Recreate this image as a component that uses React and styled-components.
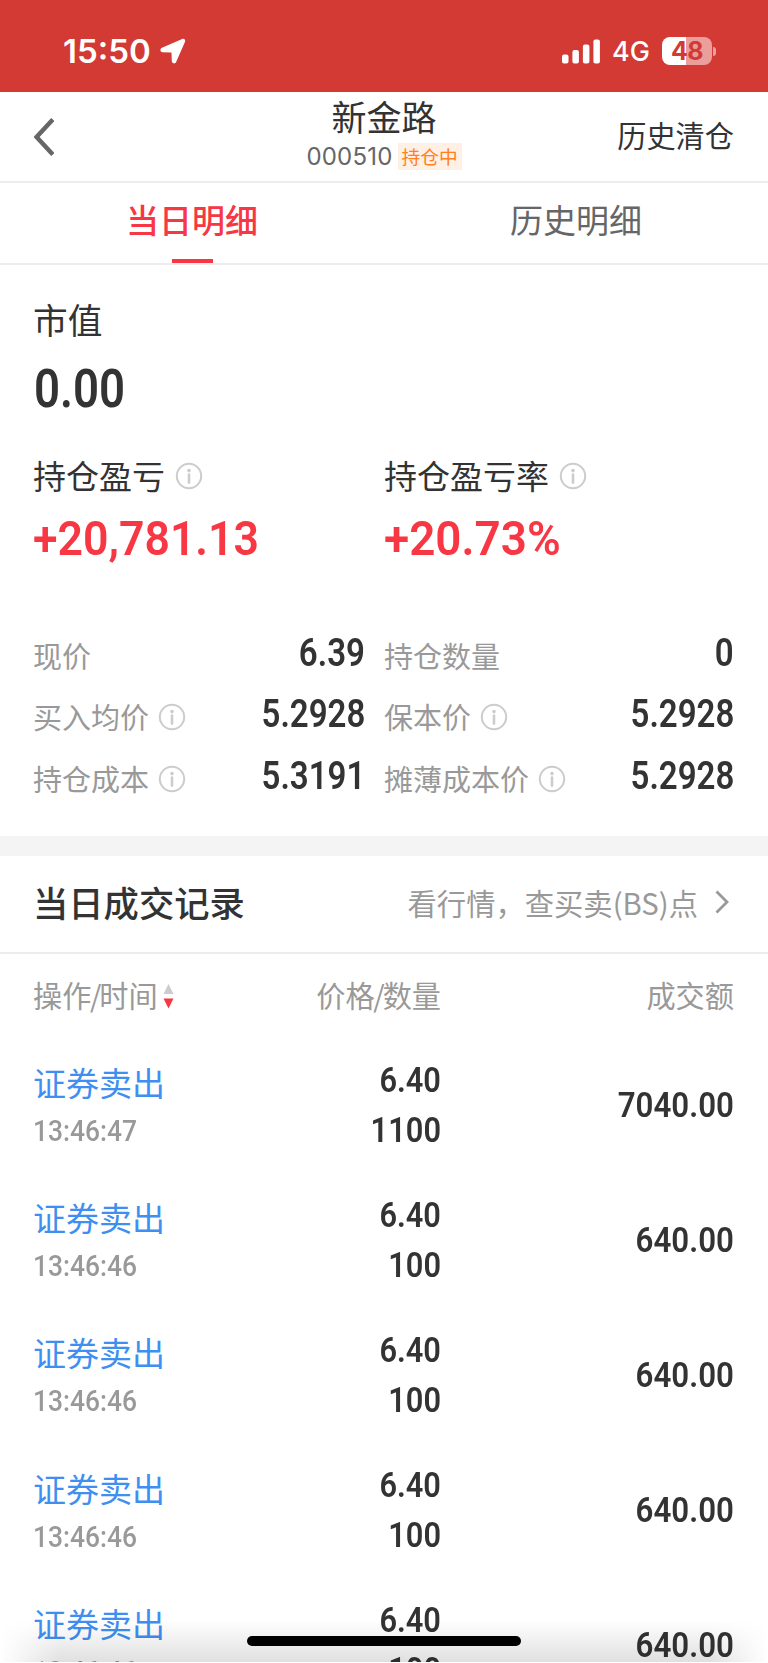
import React from "react";
import styled, { createGlobalStyle } from "styled-components";

const GlobalStyle = createGlobalStyle`
  * {
    box-sizing: border-box;
  }

  body {
    margin: 0;
    background: #fff;
    font-family: "Noto Sans CJK SC", sans-serif;
    color: #333;
  }
`;

const Screen = styled.div`
  position: relative;
  width: 768px;
  height: 1662px;
  overflow: hidden;
  background: #fff;
`;

const StatusBar = styled.div`
  display: flex;
  align-items: center;
  height: 92px;
  padding: 10px 52px 0 63px;
  background: #d33a33;
  color: #fff;
  font-family: Inter, sans-serif;
`;

const Clock = styled.span`
  width: 97px;
  font-size: 33px;
  font-weight: 600;
  line-height: 40px;
`;

const StatusIcons = styled.div`
  display: flex;
  align-items: center;
  margin-left: auto;
`;

const Network = styled.span`
  width: 50px;
  margin-left: 11px;
  padding-top: 2px;
  font-size: 27px;
  font-weight: 450;
  line-height: 34px;
`;

const Battery = styled.div`
  display: flex;
  align-items: center;
  justify-content: center;
  width: 50px;
  height: 28px;
  border-radius: 8px;
  background: linear-gradient(to right, #fff 24px, #eb9f9c 24px);
  color: #d33a33;
  font-size: 25px;
  font-weight: 700;
  line-height: 28px;
  letter-spacing: -0.5px;
`;

const BatteryTip = styled.span`
  width: 3px;
  height: 9px;
  margin-left: 1px;
  border-radius: 0 4px 4px 0;
  background: #eb9f9c;
`;

const Header = styled.header`
  display: grid;
  grid-template-columns: 1fr auto 1fr;
  align-items: center;
  height: 91px;
  padding: 0 34px;
  border-bottom: 2px solid #ededed;
`;

const TitleBlock = styled.div`
  display: flex;
  flex-direction: column;
  align-items: center;
  padding-bottom: 5px;
`;

const Title = styled.h1`
  margin: -1px 0 2px;
  font-size: 35px;
  font-weight: 400;
  line-height: 43px;
`;

const Code = styled.div`
  display: flex;
  align-items: center;
  gap: 5px;
  height: 35px;
  color: #666;
  font-family: Inter, sans-serif;
  font-size: 24px;
  letter-spacing: 0.2px;
`;

const Tag = styled.span`
  width: 64px;
  height: 27px;
  background: #fff0e6;
  color: #ff7f22;
  font-family: "Noto Sans CJK SC", sans-serif;
  font-size: 18.7px;
  line-height: 25px;
  letter-spacing: 0;
  text-align: center;
`;

const HeaderLink = styled.a`
  justify-self: end;
  padding-bottom: 5px;
  font-size: 29.2px;
  line-height: 40px;
`;

const Tabs = styled.nav`
  display: flex;
  height: 82px;
  border-bottom: 2px solid #ededed;
`;

const Tab = styled.button`
  display: flex;
  flex: 1;
  flex-direction: column;
  align-items: center;
  justify-content: space-between;
  padding: 12px 0 0;
  border: none;
  background: none;
  color: ${({ $active }) => ($active ? "#f73744" : "#666")};
  font-family: inherit;
  font-size: 33px;
  font-weight: ${({ $active }) => ($active ? 500 : 400)};
  line-height: 48px;

  &::after {
    content: "";
    width: 41px;
    height: 4px;
    background: ${({ $active }) => ($active ? "#f73744" : "transparent")};
  }
`;

const Summary = styled.section`
  height: 571px;
  padding: 30px 34px 0 33px;
`;

const MarketLabel = styled.div`
  font-size: 34.7px;
  line-height: 48px;
`;

const MarketValue = styled.div`
  height: 108px;
  padding: 16px 0 0 1px;
`;

/* narrow digits used for every amount */
const Num = styled.span`
  display: block;
  color: ${({ $color }) => $color || "#333"};
  font-family: Roboto, sans-serif;
  font-size: ${({ $size }) => $size}px;
  font-weight: ${({ $weight }) => $weight || 600};
  line-height: ${({ $line }) => $line || 50}px;
  white-space: nowrap;
  transform: scaleX(${({ $scale }) => $scale || 0.88});
  transform-origin: ${({ $right }) => ($right ? "right" : "left")} center;
`;

const Columns = styled.div`
  display: grid;
  grid-template-columns: 332px 350px;
  column-gap: 19px;
`;

const ProfitRow = styled(Columns)`
  height: 171px;
`;

const ProfitLabel = styled.div`
  display: flex;
  align-items: center;
  gap: 10px;
  font-size: 33px;
  line-height: 48px;
  margin-bottom: 15px;

  svg {
    margin-top: 2px;
  }
`;

const Stat = styled.div`
  display: flex;
  align-items: center;
  justify-content: space-between;
  height: 61.5px;
`;

const StatLabel = styled.div`
  display: flex;
  align-items: center;
  gap: 9px;
  padding-top: 4px;
  color: #999;
  font-size: 29px;
  line-height: 42px;

  svg {
    margin-top: 2px;
  }
`;

const Band = styled.div`
  height: 20px;
  background: #f4f4f4;
`;

const SectionHead = styled.div`
  display: flex;
  align-items: center;
  justify-content: space-between;
  height: 98px;
  padding: 0 39px 4px 33px;
  border-bottom: 2px solid #ededed;
`;

const SectionTitle = styled.h2`
  margin: 0;
  font-size: 35.3px;
  font-weight: 500;
  line-height: 50px;
`;

const QuoteLink = styled.a`
  display: flex;
  align-items: center;
  gap: 17px;
  color: #999;
  font-size: 29.3px;
  line-height: 42px;
`;

const TradeGrid = styled.div`
  display: grid;
  grid-template-columns: 204px 204px 1fr;
  padding: 0 34px 0 33px;
`;

const TableHead = styled(TradeGrid)`
  align-items: center;
  height: 84px;
  padding-bottom: 4px;
  color: #999;
  font-size: 29.2px;
  line-height: 42px;
`;

const HeadCell = styled.div`
  display: flex;
  align-items: center;
  justify-content: ${({ $right }) => ($right ? "flex-end" : "flex-start")};
  white-space: nowrap;

  svg {
    margin: 3px 0 0 5px;
  }
`;

const Slash = styled.span`
  margin: 0 -2px 0 -1.5px;
`;

const Trade = styled(TradeGrid)`
  align-items: center;
  height: 135.2px;
`;

const Action = styled.div`
  color: #3f8ff0;
  font-size: 33px;
  line-height: 48px;
`;

const CellStack = styled.div`
  display: flex;
  flex-direction: column;
  padding: ${({ $top }) => $top || 0}px 0 0 0;
`;

const RightNum = styled(Num).attrs({ $right: true })`
  justify-self: end;
  align-self: ${({ $self }) => $self || "auto"};
`;

const BottomShade = styled.div`
  position: absolute;
  left: 0;
  right: 0;
  bottom: 0;
  height: 42px;
  background: linear-gradient(to bottom, rgba(0, 0, 0, 0), rgba(0, 0, 0, 0.12));
  mask-image: linear-gradient(to right, transparent, #000 60px, #000 708px, transparent);
`;

const HomeIndicator = styled.div`
  position: absolute;
  left: 247px;
  bottom: 16px;
  width: 274px;
  height: 10px;
  border-radius: 5px;
  background: #000;
`;

const LocationIcon = () => (
  <svg width="26" height="26" viewBox="0 0 26 26">
    <path
      d="M22.6 1.8 L1.8 11 Q0.8 12.6 2.2 13.2 L11.4 13.4 Q12.4 13.5 12.5 14.5 L12.8 23.4 Q13.6 25 15 24 L24.2 3.2 Q24.4 1.4 22.6 1.8 Z"
      fill="#fff"
      stroke="#fff"
      strokeWidth="2"
      strokeLinejoin="round"
    />
  </svg>
);

const SignalIcon = () => (
  <svg width="39" height="25" viewBox="0 0 39 25" fill="#fff">
    <rect x="0" y="15.5" width="6.5" height="9" rx="2" />
    <rect x="10.4" y="11" width="6.5" height="13.5" rx="2" />
    <rect x="20.9" y="5.5" width="6.5" height="19" rx="2" />
    <rect x="31.4" y="0.5" width="6.5" height="24" rx="2" />
  </svg>
);

const BackIcon = () => (
  <svg width="20" height="38" viewBox="0 0 20 38" fill="none">
    <path d="M18.8 1.5 L2.6 19 L18.8 36.5" stroke="#666" strokeWidth="4.4" />
  </svg>
);

const InfoIcon = () => (
  <svg width="28" height="28" viewBox="0 0 28 28" fill="none">
    <circle cx="14" cy="14" r="12.2" stroke="#ccc" strokeWidth="2" />
    <circle cx="14" cy="8.6" r="1.8" fill="#ccc" />
    <path d="M14 12.6 V20.6" stroke="#ccc" strokeWidth="2.6" strokeLinecap="round" />
  </svg>
);

const ChevronIcon = () => (
  <svg width="14" height="24" viewBox="0 0 14 24" fill="none">
    <path d="M1.5 1.5 L12 12 L1.5 22.5" stroke="#999" strokeWidth="2.8" />
  </svg>
);

const SortIcon = () => (
  <svg width="11" height="26" viewBox="0 0 11 26">
    <path d="M5.5 1 L10.5 11 H0.5 Z" fill="#ccc" />
    <path d="M5.5 25.5 L10.5 15.5 H0.5 Z" fill="#f73744" />
  </svg>
);

const stats = [
  { label: "现价", value: "6.39" },
  { label: "持仓数量", value: "0" },
  { label: "买入均价", value: "5.2928", info: true },
  { label: "保本价", value: "5.2928", info: true },
  { label: "持仓成本", value: "5.3191", info: true },
  { label: "摊薄成本价", value: "5.2928", info: true },
];

const trades = [
  { time: "13:46:47", price: "6.40", count: "1100", amount: "7040.00" },
  { time: "13:46:46", price: "6.40", count: "100", amount: "640.00" },
  { time: "13:46:46", price: "6.40", count: "100", amount: "640.00" },
  { time: "13:46:46", price: "6.40", count: "100", amount: "640.00" },
  { time: "13:46:46", price: "6.40", count: "100", amount: "640.00" },
];

const App = () => {
  return (
    <>
      <GlobalStyle />
      <Screen>
        <StatusBar>
          <Clock>15:50</Clock>
          <LocationIcon />
          <StatusIcons>
            <SignalIcon />
            <Network>4G</Network>
            <Battery>48</Battery>
            <BatteryTip />
          </StatusIcons>
        </StatusBar>

        <Header>
          <BackIcon />
          <TitleBlock>
            <Title>新金路</Title>
            <Code>
              000510
              <Tag>持仓中</Tag>
            </Code>
          </TitleBlock>
          <HeaderLink>历史清仓</HeaderLink>
        </Header>

        <Tabs>
          <Tab $active>当日明细</Tab>
          <Tab>历史明细</Tab>
        </Tabs>

        <Summary>
          <MarketLabel>市值</MarketLabel>
          <MarketValue>
            <Num $size={53} $scale={0.86} $line={60}>0.00</Num>
          </MarketValue>
          <ProfitRow>
            <div>
              <ProfitLabel>
                持仓盈亏
                <InfoIcon />
              </ProfitLabel>
              <Num $size={49} $scale={0.91} $color="#f73744">+20,781.13</Num>
            </div>
            <div>
              <ProfitLabel>
                持仓盈亏率
                <InfoIcon />
              </ProfitLabel>
              <Num $size={49} $scale={0.935} $color="#f73744">+20.73%</Num>
            </div>
          </ProfitRow>
          <Columns>
            {stats.map((item) => (
              <Stat key={item.label}>
                <StatLabel>
                  {item.label}
                  {item.info && <InfoIcon />}
                </StatLabel>
                <Num $size={38} $scale={0.87} $right>{item.value}</Num>
              </Stat>
            ))}
          </Columns>
        </Summary>

        <Band />

        <SectionHead>
          <SectionTitle>当日成交记录</SectionTitle>
          <QuoteLink>
            看行情，查买卖(BS)点
            <ChevronIcon />
          </QuoteLink>
        </SectionHead>

        <TableHead>
          <HeadCell>
            操作<Slash>/</Slash>时间
            <SortIcon />
          </HeadCell>
          <HeadCell $right>
            价格<Slash>/</Slash>数量
          </HeadCell>
          <HeadCell $right>成交额</HeadCell>
        </TableHead>

        {trades.map((trade, index) => (
          <Trade key={index}>
            <CellStack $top={3}>
              <Action>证券卖出</Action>
              <Num $size={30} $color="#999" $weight={500}>{trade.time}</Num>
            </CellStack>
            <CellStack>
              <RightNum $size={35} $self="flex-end">{trade.price}</RightNum>
              <RightNum $size={35} $self="flex-end">{trade.count}</RightNum>
            </CellStack>
            <RightNum $size={35} $scale={0.895}>{trade.amount}</RightNum>
          </Trade>
        ))}

        <BottomShade />
        <HomeIndicator />
      </Screen>
    </>
  );
};

export default App;
